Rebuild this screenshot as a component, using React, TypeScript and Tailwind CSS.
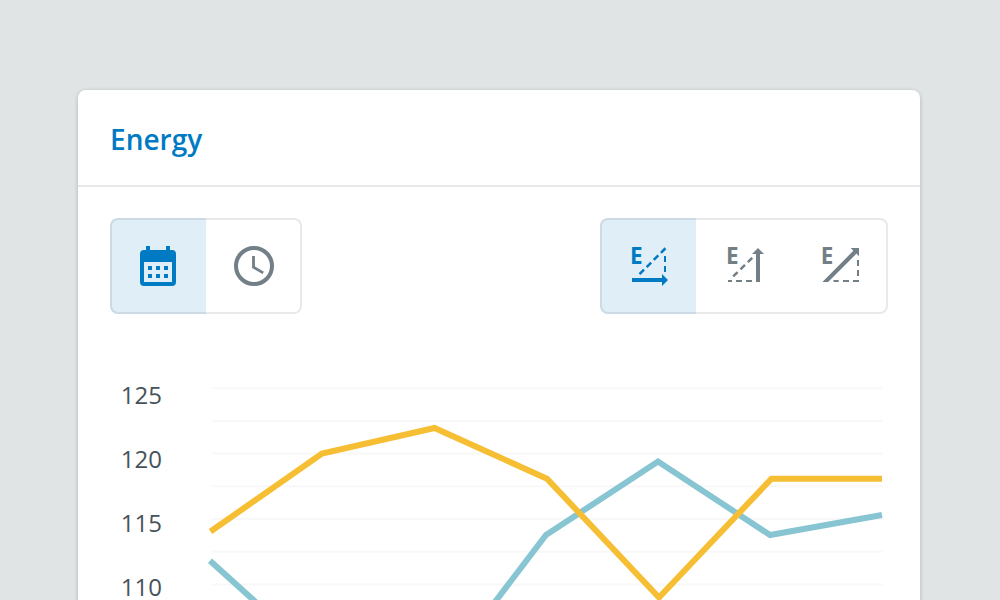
import type { ReactNode } from "react";

function CalendarIcon() {
  return (
    <svg width="36" height="40" viewBox="0 0 36 40" fill="currentColor">
      <path
        fillRule="evenodd"
        d="M6 0h4v4h16V0h4v4h2a4 4 0 0 1 4 4v28a4 4 0 0 1-4 4H4a4 4 0 0 1-4-4V8a4 4 0 0 1 4-4h2zM4 16v20h28V16z"
      />
      <path d="M8 20h4v4H8zM16 20h4v4h-4zM24 20h4v4h-4zM8 28h4v4H8zM16 28h4v4h-4zM24 28h4v4h-4z" />
    </svg>
  );
}

function ClockIcon() {
  return (
    <svg width="40" height="40" viewBox="0 0 40 40" fill="none" stroke="currentColor">
      <circle cx="20" cy="20" r="18" strokeWidth="4" />
      <path d="M19.5 10v11.2l9.7 5.7" strokeWidth="2.8" />
    </svg>
  );
}

function Vector({ labelX = 2, children }: { labelX?: number; children: ReactNode }) {
  return (
    <svg className="overflow-visible" width="40" height="40" viewBox="0 0 40 40" fill="none" stroke="currentColor" strokeWidth="2">
      <text x={labelX} y="18" fill="currentColor" stroke="none" className="text-[22.5px] font-bold">E</text>
      {children}
    </svg>
  );
}

function HorizontalVectorIcon() {
  return (
    <Vector>
      <path d="M11.5 28.2L38 1.7" strokeWidth="2.5" strokeDasharray="6.4 3.7" />
      <path d="M37 10v6M37 20v6" />
      <path d="M4 32h30v-4l6 6-6 6v-4H4z" fill="currentColor" stroke="none" />
    </Vector>
  );
}

function VerticalVectorIcon() {
  return (
    <Vector>
      <path d="M9.2 30.4L28.5 11.6" strokeWidth="2.5" strokeDasharray="6.2 4" />
      <path d="M4 35h4M12 35h6M22 35h6" />
      <path d="M32 36V8h-4l6-6 6 6h-4v28z" fill="currentColor" stroke="none" />
    </Vector>
  );
}

function DiagonalVectorIcon() {
  return (
    <Vector labelX={0.8}>
      <path d="M30.7 2H39v8.3L36.5 7.6 8.1 36H2.4L33.3 4.8z" fill="currentColor" stroke="none" />
      <path d="M13.5 35h5.2M23 35h6M33 35h6M38 36v-2M38 30v-6M38 20v-6" />
    </Vector>
  );
}

function Segment({ active = false, label, children }: { active?: boolean; label: string; children: ReactNode }) {
  return (
    <button
      aria-label={label}
      aria-pressed={active}
      className={
        active
          ? "flex h-24 w-24 items-center justify-center rounded-l-lg border-2 border-r-0 border-[#cbdae4] bg-[#e0eef7] pr-0.5 text-[#007ac3]"
          : "flex h-24 w-24 items-center justify-center border-y-2 border-[#e8e9e9] text-[#727f86] last:rounded-r-lg last:border-r-2 last:pl-0.5"
      }
    >
      {children}
    </button>
  );
}

const ticks = [125, 120, 115, 110];
const gridLines = [0, 1, 2, 3, 4, 5, 6];

export default function App() {
  return (
    <main className="h-[600px] w-[1000px] overflow-hidden bg-[#e0e4e4] pt-[90px] pl-[78px] font-['Open_Sans',sans-serif]">
      <section className="h-[560px] w-[842px] rounded-lg bg-white shadow-[0_1px_4px_rgba(0,30,35,0.22)]">
        <header className="flex h-[97px] items-center border-b-2 border-[#e7e8e8] px-8 pt-[3px]">
          <h1 className="text-[28px] leading-9 font-semibold text-[#007ac3]">Energy</h1>
        </header>
        <div className="flex justify-between px-8 pt-[31px]">
          <div className="flex">
            <Segment active label="Calendar"><CalendarIcon /></Segment>
            <Segment label="Clock"><ClockIcon /></Segment>
          </div>
          <div className="flex">
            <Segment active label="Horizontal energy"><HorizontalVectorIcon /></Segment>
            <Segment label="Vertical energy"><VerticalVectorIcon /></Segment>
            <Segment label="Total energy"><DiagonalVectorIcon /></Segment>
          </div>
        </div>
        <div className="flex pt-[49px]">
          <div className="w-[84px] text-right text-2xl leading-6 text-[#47535a]">
            {ticks.map((tick) => (
              <div key={tick} className="flex h-16 items-center justify-end">{tick}</div>
            ))}
          </div>
          <svg className="ml-[38px]" width="700" height="237" viewBox="200 363 700 237" fill="none">
            <g stroke="#f8f8f8" strokeWidth="2">
              {gridLines.map((line) => (
                <path key={line} d={`M212 ${388.2 + line * 32.7}H882.7`} />
              ))}
            </g>
            <path d="M210 560.8L322 662L434 682L546 535L658 461.5L770 535L882 515" stroke="#87c5d3" strokeWidth="6" />
            <path d="M210.5 531.5L322 453.6L434.5 428L547 478.7L659 597.5L771.5 478.7H882" stroke="#f6be32" strokeWidth="6" />
          </svg>
        </div>
      </section>
    </main>
  );
}
